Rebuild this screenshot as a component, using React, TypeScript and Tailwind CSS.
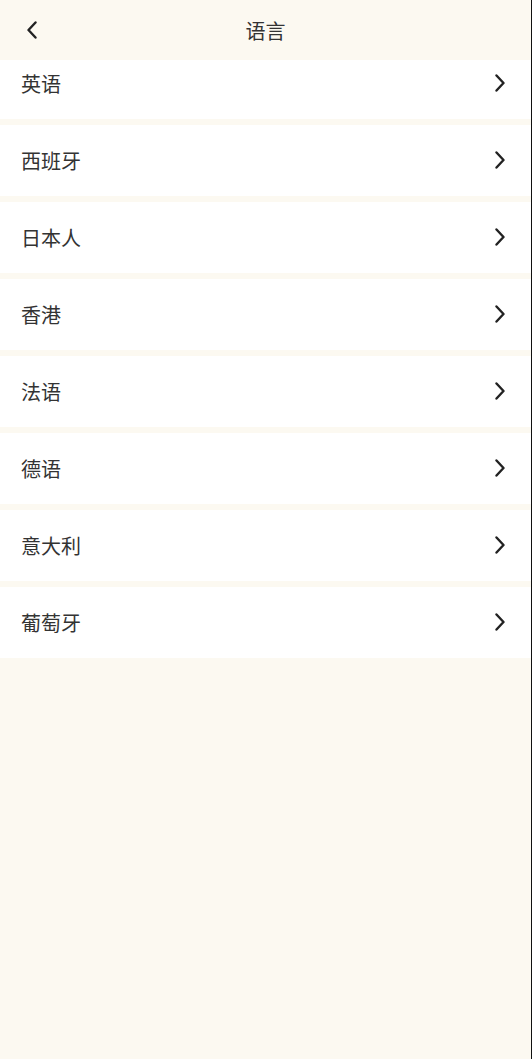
import React from 'react';

const languages = ['英语', '西班牙', '日本人', '香港', '法语', '德语', '意大利', '葡萄牙'];

const Chevron: React.FC<{ dir: 'left' | 'right'; className?: string }> = ({ dir, className }) => (
  <svg viewBox="0 0 10 18" className={className} fill="none" stroke="#222" strokeWidth={2.4} strokeLinecap="round" strokeLinejoin="round">
    {dir === 'right' ? <polyline points="1.5,1.5 8.5,9 1.5,16.5" /> : <polyline points="8.5,1.5 1.5,9 8.5,16.5" />}
  </svg>
);

export default function App() {
  return (
    <div
      className="relative min-h-[1059px] w-full border-r border-[#111] bg-[#fcf9f1] text-[#333]"
      style={{ fontFamily: '"Noto Sans CJK SC", "Noto Sans", sans-serif' }}
    >
      {/* header sits over the top of the list */}
      <header className="absolute inset-x-0 top-0 z-10 flex h-[60px] items-center justify-center bg-[#fcf9f1] pt-[2px]">
        <button className="absolute left-[27px] top-[21px] flex items-center">
          <Chevron dir="left" className="h-[18px] w-[10px]" />
        </button>
        <span className="text-[20px] leading-none">语言</span>
      </header>

      <main className="flex flex-col gap-[6px] pt-[48px]">
        {languages.map((lang) => (
          <div key={lang} className="flex h-[71px] items-center justify-between bg-white pl-[21px] pr-[26px]">
            <span className="text-[20px] leading-none">{lang}</span>
            <Chevron dir="right" className="-mt-[2px] h-[18px] w-[10px]" />
          </div>
        ))}
      </main>
    </div>
  );
}
